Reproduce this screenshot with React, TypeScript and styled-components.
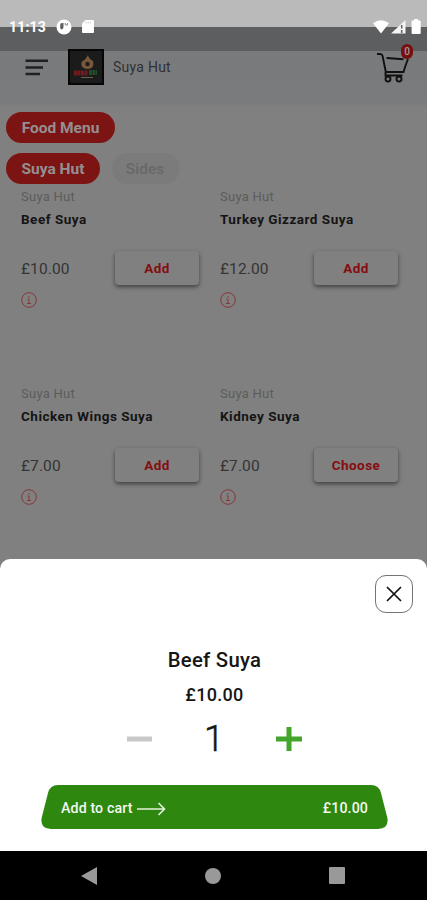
import React from "react";
import styled, { createGlobalStyle } from "styled-components";

const Global = createGlobalStyle`
  *, *::before, *::after { box-sizing: border-box; }
  body { margin: 0; background: #808080; font-family: Roboto, sans-serif; }
  button { font-family: inherit; border: 0; padding: 0; background: none; }
  svg { display: block; }
`;

const Phone = styled.div`
  width: 427px;
  height: 900px;
  display: flex;
  flex-direction: column;
  background: #808080;
  overflow: hidden;
`;

const StatusBar = styled.div`
  height: 51px;
  flex: none;
  display: flex;
  align-items: center;
  justify-content: space-between;
  padding: 2px 4px 0 9px;
  background: linear-gradient(#bababa 0 27px, #5d5e5f 27px);
  color: #fff;
`;

const StatusGroup = styled.div<{ $gap: number }>`
  display: flex;
  align-items: center;
  gap: ${(p) => p.$gap}px;
`;

const Clock = styled.span`
  font-size: 14px;
  font-weight: 700;
  line-height: 18px;
  letter-spacing: 0.2px;
  width: 38px;
  white-space: nowrap;
`;

const Header = styled.header`
  height: 57px;
  flex: none;
  display: flex;
  align-items: flex-start;
  padding: 0 14px 0 25px;
  background: linear-gradient(#797a7b, #7a7b7c 90%, #808080);
`;

const MenuIcon = styled.div`
  width: 43px;
  padding-top: 8px;
`;

const Logo = styled.div`
  width: 36px;
  height: 36px;
  margin-top: -2px;
  background: #1b1b1b;
  border: 2px solid #060606;
`;

const Brand = styled.div`
  flex: 1;
  padding: 7px 0 0 9px;
  font-size: 14px;
  line-height: 19px;
  letter-spacing: 0.25px;
  color: #303131;
`;

const Cart = styled.div`
  position: relative;
  width: 37px;
  padding-top: 1px;
`;

const CartBadge = styled.span`
  position: absolute;
  top: -7px;
  right: 0;
  width: 12px;
  height: 15px;
  border-radius: 6px;
  background: #760f10;
  color: #a39a9a;
  font-size: 10px;
  font-weight: 500;
  line-height: 15px;
  text-align: center;
`;

const ChipRow = styled.div<{ $top: number }>`
  display: flex;
  flex: none;
  gap: 12px;
  padding: ${(p) => p.$top}px 0 0 6px;
`;

const Chip = styled.div<{ $width: number; $muted?: boolean }>`
  width: ${(p) => p.$width}px;
  height: 31px;
  border-radius: 16px;
  background: ${(p) => (p.$muted ? "#7b7b7b" : "#7d1414")};
  color: ${(p) => (p.$muted ? "#686868" : "#929090")};
  font-size: 15.5px;
  font-weight: ${(p) => (p.$muted ? 500 : 700)};
  line-height: 32px;
  text-align: center;
  text-indent: ${(p) => (p.$muted ? -2 : 0)}px;
  white-space: nowrap;
`;

const Grid = styled.main`
  display: grid;
  grid-template-columns: 178px 178px;
  grid-auto-rows: 197px;
  column-gap: 21px;
  padding: 4px 0 0 21px;
  height: 375px;
  flex: none;
`;

const Card = styled.article`
  display: flex;
  flex-direction: column;
  align-items: stretch;
`;

const Vendor = styled.div`
  font-size: 13px;
  line-height: 18px;
  letter-spacing: 0.25px;
  color: #5c5c5c;
`;

const ItemName = styled.div`
  margin-top: 4px;
  font-size: 13.5px;
  font-weight: 700;
  line-height: 18px;
  letter-spacing: 0.5px;
  color: #141414;
`;

const PriceRow = styled.div`
  display: flex;
  align-items: center;
  justify-content: space-between;
  margin-top: 23px;
`;

const Price = styled.div`
  padding-top: 1px;
  font-size: 15.5px;
  letter-spacing: 0.1px;
  color: #343434;
`;

const AddButton = styled.button`
  width: 84px;
  height: 34px;
  border-radius: 4px;
  background: #808080;
  box-shadow: 0 2px 4px rgba(0, 0, 0, 0.5);
  color: #850d10;
  font-size: 13.5px;
  font-weight: 700;
  letter-spacing: 0.45px;
`;

const Info = styled.div`
  margin-top: 7px;
`;

const Sheet = styled.section`
  height: 292px;
  flex: none;
  display: flex;
  flex-direction: column;
  align-items: center;
  border-radius: 10px 10px 0 0;
  padding-left: 2px;
  background: #fff;
  color: #161616;
`;

const CloseButton = styled.button`
  align-self: flex-end;
  flex: none;
  width: 38px;
  height: 38px;
  margin: 16px 14px 0 0;
  display: grid;
  place-items: center;
  border: 1px solid #747474;
  border-radius: 11px;
`;

const SheetTitle = styled.h2`
  margin: 34px 0 0;
  font-size: 20.3px;
  font-weight: 500;
  line-height: 26px;
  letter-spacing: 0.3px;
`;

const SheetPrice = styled.div`
  margin-top: 10px;
  font-size: 18px;
  font-weight: 500;
  line-height: 24px;
  letter-spacing: 0.3px;
`;

const Stepper = styled.div`
  display: flex;
  align-items: center;
  justify-content: space-between;
  width: 175px;
  height: 40px;
  margin-top: 12px;
`;

const Quantity = styled.span`
  font-size: 36px;
  font-weight: 300;
  line-height: 40px;
  -webkit-text-stroke: 0.5px #161616;
`;

const CartButton = styled.button`
  width: 347px;
  height: 44px;
  margin-top: 26px;
  flex: none;
  display: flex;
  align-items: center;
  padding: 1px 20px 0;
  background: #2e870f;
  clip-path: path("M17 0H330Q338 0 340 8L346.4 33Q348 44 337 44H10Q-1 44 .6 33L7 8Q9 0 17 0Z");
  color: #f2f8ef;
  font-size: 14.2px;
  font-weight: 500;
  letter-spacing: 0.12px;
  white-space: nowrap;
`;

const ArrowSlot = styled.span`
  margin: 3px 0 0 2px;
`;

const CartTotal = styled.span`
  margin-left: auto;
`;

const NavBar = styled.nav`
  height: 49px;
  flex: none;
  display: flex;
  align-items: center;
  justify-content: space-between;
  padding: 0 82px 0 81px;
  background: #000;
`;

const items = [
  { name: "Beef Suya", price: "£10.00", action: "Add" },
  { name: "Turkey Gizzard Suya", price: "£12.00", action: "Add" },
  { name: "Chicken Wings Suya", price: "£7.00", action: "Add" },
  { name: "Kidney Suya", price: "£7.00", action: "Choose" },
];

const InfoIcon = () => (
  <svg width="16" height="16" viewBox="0 0 16 16" fill="none" stroke="#873638">
    <circle cx="8" cy="8" r="7.3" />
    <path d="M6.5 7H8v4.5M6 11.5h4M8 4v1.5" />
  </svg>
);

export default function App() {
  return (
    <>
      <Global />
      <Phone>
        <StatusBar>
          <StatusGroup $gap={9}>
            <Clock>11:13</Clock>
            <svg width="16" height="16" viewBox="0 0 16 16">
              <circle cx="8" cy="8" r="7.5" fill="#fff" />
              <path d="M4.2 6.2q0-2.3 2-2.3h1.3v4q0 1.8-1.7 2.5-1.6-.2-1.6-2z" fill="#5d5e5f" />
              <path d="M9.3 4v2h2.2V4" stroke="#8a8a8a" fill="none" />
            </svg>
            <svg width="14" height="15" viewBox="0 0 13 15">
              <path d="M4 1h7.5q1 0 1 1v11q0 1-1 1h-10q-1 0-1-1V4.5z" fill="#fff" />
              <path d="M4.5 2.5v2M6.7 2.5v2M8.9 2.5v2" stroke="#d0d0d0" />
            </svg>
          </StatusGroup>
          <StatusGroup $gap={2}>
            <svg width="16" height="14" viewBox="0 0 16 14">
              <path d="M0 3.2Q8-2.7 16 3.2L8 13.5z" fill="#fff" />
            </svg>
            <svg width="15" height="14" viewBox="0 0 15 14">
              <path d="M14.5 0v13.5H0z" fill="#f4f4f4" />
              <path d="M10.7 5v3.5M10.7 10v3" stroke="#666" strokeWidth="1.6" />
            </svg>
            <svg width="15" height="15" viewBox="0 0 15 15">
              <path d="M6 0h4v1.5h1.7q1 0 1 1V14q0 1-1 1H4.600q-1 0-1-1V2.5q0-1 1-1H6z" fill="#fff" />
            </svg>
          </StatusGroup>
        </StatusBar>

        <Header>
          <MenuIcon>
            <svg width="24" height="18" viewBox="0 0 24 18" stroke="#202122" strokeWidth="2.6">
              <path d="M.5 1.8H23M.5 8.5H18M.5 15H15" />
            </svg>
          </MenuIcon>
          <Logo>
            <svg width="32" height="32" viewBox="0 0 32 32">
              <path d="M18 4q1 4 5 6 2 7-5 8-8-.5-6.5-7 4-2 6.5-7z" fill="#77583a" />
              <circle cx="17.5" cy="13" r="2.2" fill="#211a16" />
              <path d="M4 22h14" stroke="#701c1e" strokeWidth="5" strokeDasharray="3 .5" />
              <path d="M19 21.5h8" stroke="#204d27" strokeWidth="5" strokeDasharray="3 .5" />
              <path d="M11 26.5h12" stroke="#696149" />
            </svg>
          </Logo>
          <Brand>Suya Hut</Brand>
          <Cart>
            <svg width="34" height="32" viewBox="0 0 34 32" fill="none" stroke="#111" strokeWidth="1.9">
              <path d="M1 2h3q2 0 2.600 2l3.200 16h17.700q2-7 4.500-13M10.500 6l17 1.200M9.500 20v3.500h17" />
              <circle cx="12" cy="27" r="2.500" />
              <circle cx="23" cy="27" r="2.500" />
            </svg>
            <CartBadge>0</CartBadge>
          </Cart>
        </Header>

        <ChipRow $top={4}>
          <Chip $width={109}>Food Menu</Chip>
        </ChipRow>
        <ChipRow $top={10}>
          <Chip $width={94}>Suya Hut</Chip>
          <Chip $width={68} $muted>Sides</Chip>
        </ChipRow>

        <Grid>
          {items.map((item) => (
            <Card key={item.name}>
              <Vendor>Suya Hut</Vendor>
              <ItemName>{item.name}</ItemName>
              <PriceRow>
                <Price>{item.price}</Price>
                <AddButton>{item.action}</AddButton>
              </PriceRow>
              <Info>
                <InfoIcon />
              </Info>
            </Card>
          ))}
        </Grid>

        <Sheet>
          <CloseButton aria-label="Close">
            <svg width="16" height="16" viewBox="0 0 16 16" stroke="#111" strokeWidth="1.7">
              <path d="M1 1l14 14M15 1L1 15" />
            </svg>
          </CloseButton>
          <SheetTitle>Beef Suya</SheetTitle>
          <SheetPrice>£10.00</SheetPrice>
          <Stepper>
            <svg width="25" height="26" viewBox="0 0 25 26">
              <path d="M0 13h25" stroke="#c8c8ca" strokeWidth="5" />
            </svg>
            <Quantity>1</Quantity>
            <svg width="26" height="26" viewBox="0 0 26 26">
              <path d="M0 13h26M13 1v24" stroke="#43a52b" strokeWidth="5" />
            </svg>
          </Stepper>
          <CartButton>
            <span>Add to cart</span>
            <ArrowSlot>
              <svg width="31" height="14" viewBox="0 0 31 14" fill="none" stroke="#e3f3dc" strokeWidth="1.6">
                <path d="M2 7h28M23.5 1l6 6-6 6" />
              </svg>
            </ArrowSlot>
            <CartTotal>£10.00</CartTotal>
          </CartButton>
        </Sheet>

        <NavBar>
          <svg width="16" height="18" viewBox="0 0 16 18">
            <path d="M16 0v18L0 9z" fill="#999" />
          </svg>
          <svg width="16" height="16" viewBox="0 0 16 16">
            <circle cx="8" cy="8" r="8" fill="#999" />
          </svg>
          <svg width="16" height="17" viewBox="0 0 16 17">
            <rect width="16" height="17" rx="1" fill="#999" />
          </svg>
        </NavBar>
      </Phone>
    </>
  );
}
